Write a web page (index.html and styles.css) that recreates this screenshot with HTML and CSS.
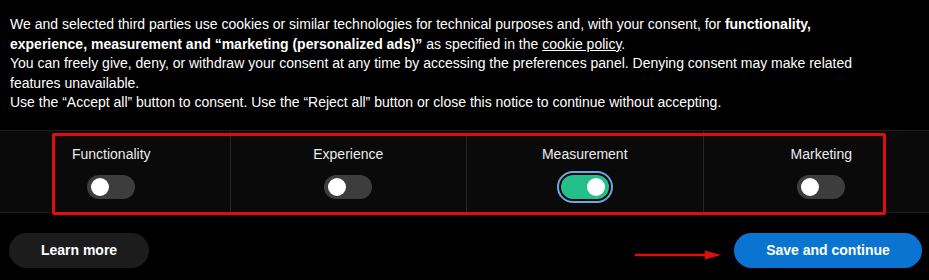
FILE: index.html
```html
<!DOCTYPE html>
<html lang="en">
<head>
<meta charset="utf-8">
<title>Cookie notice</title>
<link rel="stylesheet" href="styles.css">
</head>
<body>
<div class="banner">
  <div class="notice">
    <p class="line">We and selected third parties use cookies or similar technologies for technical purposes and, with your consent, for <b>functionality,</b></p>
    <p class="line"><b>experience, measurement and “marketing (personalized ads)”</b> as specified in the <a class="link" href="#">cookie policy</a>.</p>
    <p class="line">You can freely give, deny, or withdraw your consent at any time by accessing the preferences panel. Denying consent may make related features unavailable.</p>
    <p class="line">Use the “Accept all” button to consent. Use the “Reject all” button or close this notice to continue without accepting.</p>
  </div>

  <div class="purposes">
    <div class="purpose">
      <span class="label">Functionality</span>
      <span class="switch"><span class="knob"></span></span>
    </div>
    <div class="purpose">
      <span class="label">Experience</span>
      <span class="switch"><span class="knob"></span></span>
    </div>
    <div class="purpose">
      <span class="label">Measurement</span>
      <span class="switch switch-on"><span class="knob"></span></span>
    </div>
    <div class="purpose">
      <span class="label">Marketing</span>
      <span class="switch"><span class="knob"></span></span>
    </div>
    <div class="highlight"></div>
  </div>

  <div class="actions">
    <button class="btn btn-secondary">Learn more</button>
    <svg class="arrow" width="88" height="12" viewBox="0 0 88 12">
      <line x1="0" y1="6" x2="72" y2="6" stroke="#e00d0d" stroke-width="2.5"/>
      <polygon points="70,1.5 86,6 70,10.5" fill="#e00d0d"/>
    </svg>
    <button class="btn btn-primary">Save and continue</button>
  </div>
</div>
</body>
</html>
```

FILE: styles.css
```css
html, body {
  margin: 0;
  padding: 0;
  background: #000;
  overflow: hidden;
}

.banner {
  width: 929px;
  height: 280px;
  font-family: "Liberation Sans", Arial, sans-serif;
  color: #fff;
  font-size: 14px;
}

.notice {
  padding: 15px 0 0 10px;
  width: 870px;
  line-height: 19.6px;
}

.notice .line {
  margin: 0;
}

.notice b {
  font-weight: bold;
}

.link {
  color: #fff;
  text-decoration: underline;
}

.purposes {
  position: relative;
  margin: 17px -10px 0 -7px;
  display: grid;
  grid-template-columns: repeat(4, 1fr);
  background: #0a0a0a;
  border-top: 1px solid #1e1e1e;
  border-bottom: 1px solid #1e1e1e;
}

.purpose {
  display: flex;
  flex-direction: column;
  align-items: center;
  gap: 10px;
  padding: 14px 0 13px;
}

.purpose + .purpose {
  border-left: 1px solid #262626;
}

.label {
  line-height: 19.6px;
  color: #ececec;
}

.switch {
  position: relative;
  display: block;
  width: 48px;
  height: 24px;
  border-radius: 12px;
  background: #3d3d3d;
}

.knob {
  position: absolute;
  top: 3px;
  left: 4px;
  width: 18px;
  height: 18px;
  border-radius: 50%;
  background: #fff;
}

.switch-on {
  background: #24c08b;
  outline: 2px solid #73a3e2;
  outline-offset: 2px;
}

.switch-on .knob {
  left: auto;
  right: 4px;
}

.highlight {
  position: absolute;
  left: 59px;
  top: 2px;
  width: 834px;
  height: 82px;
  box-sizing: border-box;
  border: 3px solid #e00d0d;
  border-radius: 2px;
}

.actions {
  position: relative;
  display: flex;
  justify-content: space-between;
  align-items: center;
  margin-top: 20px;
  padding: 0 7px 0 9px;
}

.btn {
  height: 35px;
  border: none;
  border-radius: 18px;
  font-family: "Liberation Sans", Arial, sans-serif;
  font-size: 14px;
  font-weight: bold;
  color: #fff;
  padding: 0;
  cursor: pointer;
}

.btn-secondary {
  width: 140px;
  background: #1c1c1c;
}

.btn-primary {
  width: 188px;
  background: #0a74d1;
}

.arrow {
  position: absolute;
  right: 206px;
  top: 16px;
}
```
